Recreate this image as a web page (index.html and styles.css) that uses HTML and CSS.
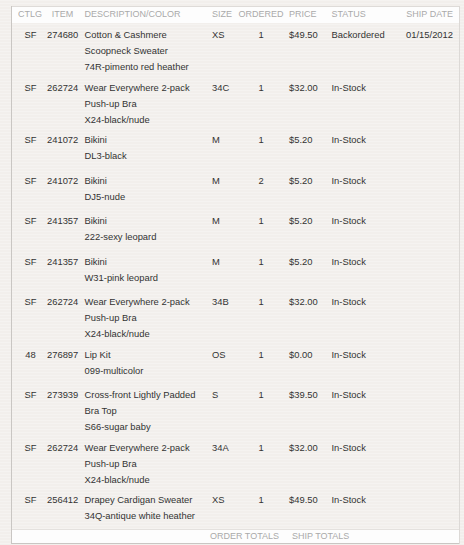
FILE: index.html
```html
<!DOCTYPE html>
<html>
<head>
<meta charset="utf-8">
<link rel="stylesheet" href="styles.css">
</head>
<body>
<div class="table">
  <div class="row head">
    <div class="c ctr">CTLG</div>
    <div class="c ctr">ITEM</div>
    <div class="c desc">DESCRIPTION/COLOR</div>
    <div class="c size">SIZE</div>
    <div class="c ctr">ORDERED</div>
    <div class="c price">PRICE</div>
    <div class="c status">STATUS</div>
    <div class="c date">SHIP DATE</div>
  </div>

  <div class="row item">
    <div class="c ctr cat">SF</div><div class="c ctr">274680</div>
    <div class="c desc"><div>Cotton &amp; Cashmere</div><div>Scoopneck Sweater</div><div>74R-pimento red heather</div></div>
    <div class="c size">XS</div><div class="c ctr">1</div><div class="c price">$49.50</div><div class="c status">Backordered</div><div class="c date">01/15/2012</div>
  </div>

  <div class="row item">
    <div class="c ctr cat">SF</div><div class="c ctr">262724</div>
    <div class="c desc"><div>Wear Everywhere 2-pack</div><div>Push-up Bra</div><div>X24-black/nude</div></div>
    <div class="c size">34C</div><div class="c ctr">1</div><div class="c price">$32.00</div><div class="c status">In-Stock</div><div class="c date"></div>
  </div>

  <div class="row item">
    <div class="c ctr cat">SF</div><div class="c ctr">241072</div>
    <div class="c desc"><div>Bikini</div><div>DL3-black</div></div>
    <div class="c size">M</div><div class="c ctr">1</div><div class="c price">$5.20</div><div class="c status">In-Stock</div><div class="c date"></div>
  </div>

  <div class="row item">
    <div class="c ctr cat">SF</div><div class="c ctr">241072</div>
    <div class="c desc"><div>Bikini</div><div>DJ5-nude</div></div>
    <div class="c size">M</div><div class="c ctr">2</div><div class="c price">$5.20</div><div class="c status">In-Stock</div><div class="c date"></div>
  </div>

  <div class="row item">
    <div class="c ctr cat">SF</div><div class="c ctr">241357</div>
    <div class="c desc"><div>Bikini</div><div>222-sexy leopard</div></div>
    <div class="c size">M</div><div class="c ctr">1</div><div class="c price">$5.20</div><div class="c status">In-Stock</div><div class="c date"></div>
  </div>

  <div class="row item">
    <div class="c ctr cat">SF</div><div class="c ctr">241357</div>
    <div class="c desc"><div>Bikini</div><div>W31-pink leopard</div></div>
    <div class="c size">M</div><div class="c ctr">1</div><div class="c price">$5.20</div><div class="c status">In-Stock</div><div class="c date"></div>
  </div>

  <div class="row item">
    <div class="c ctr cat">SF</div><div class="c ctr">262724</div>
    <div class="c desc"><div>Wear Everywhere 2-pack</div><div>Push-up Bra</div><div>X24-black/nude</div></div>
    <div class="c size">34B</div><div class="c ctr">1</div><div class="c price">$32.00</div><div class="c status">In-Stock</div><div class="c date"></div>
  </div>

  <div class="row item">
    <div class="c ctr cat">48</div><div class="c ctr">276897</div>
    <div class="c desc"><div>Lip Kit</div><div>099-multicolor</div></div>
    <div class="c size">OS</div><div class="c ctr">1</div><div class="c price">$0.00</div><div class="c status">In-Stock</div><div class="c date"></div>
  </div>

  <div class="row item">
    <div class="c ctr cat">SF</div><div class="c ctr">273939</div>
    <div class="c desc"><div>Cross-front Lightly Padded</div><div>Bra Top</div><div>S66-sugar baby</div></div>
    <div class="c size">S</div><div class="c ctr">1</div><div class="c price">$39.50</div><div class="c status">In-Stock</div><div class="c date"></div>
  </div>

  <div class="row item">
    <div class="c ctr cat">SF</div><div class="c ctr">262724</div>
    <div class="c desc"><div>Wear Everywhere 2-pack</div><div>Push-up Bra</div><div>X24-black/nude</div></div>
    <div class="c size">34A</div><div class="c ctr">1</div><div class="c price">$32.00</div><div class="c status">In-Stock</div><div class="c date"></div>
  </div>

  <div class="row item">
    <div class="c ctr cat">SF</div><div class="c ctr">256412</div>
    <div class="c desc"><div>Drapey Cardigan Sweater</div><div>34Q-antique white heather</div></div>
    <div class="c size">XS</div><div class="c ctr">1</div><div class="c price">$49.50</div><div class="c status">In-Stock</div><div class="c date"></div>
  </div>

  <div class="row foot">
    <div class="c total-order">ORDER TOTALS</div>
    <div class="c total-ship">SHIP TOTALS</div>
  </div>
</div>
</body>
</html>
```

FILE: styles.css
```css
html, body {
  margin: 0;
  padding: 0;
}
body {
  background-color: #f2efec;
  background-image: repeating-linear-gradient(180deg, rgba(255,255,255,0.25) 0px, rgba(255,255,255,0.25) 1px, rgba(0,0,0,0) 1px, rgba(0,0,0,0) 3px);
  font-family: "Liberation Sans", Arial, sans-serif;
  color: #333333;
  padding: 6px 0 0 11px;
  width: 464px;
  height: 545px;
  box-sizing: border-box;
  overflow: hidden;
}
.table {
  width: 449px;
  border-left: 1px solid #c9c6c3;
  border-right: 1px solid #dcd9d6;
  box-sizing: border-box;
}
.row {
  display: grid;
  grid-template-columns: 35px 31px 130px 28px 50px 42px 70px 61px;
}
.head {
  background: #fdfdfd;
  border-top: 1px solid #dedbd8;
  height: 17px;
  box-sizing: border-box;
  font-size: 9px;
  color: #aaaaaa;
  line-height: 15px;
}
.item {
  font-size: 9.4px;
  line-height: 16px;
  padding: 4px 0 0.5px;
  min-height: 40.5px;
  box-sizing: border-box;
}
.c {
  white-space: nowrap;
}
.ctr {
  text-align: center;
}
.cat {
  padding-left: 2px;
}
.head .ctr:first-child {
  padding-left: 1px;
}
.desc {
  padding-left: 6.5px;
}
.size {
  padding-left: 4px;
}
.price {
  padding-left: 3px;
}
.status {
  padding-left: 3.5px;
}
.date {
  text-align: right;
  padding-right: 6px;
}
.foot {
  background: #fdfdfd;
  border-top: 1px solid #e4e1de;
  border-bottom: 1px solid #c9c6c3;
  height: 15px;
  box-sizing: border-box;
  font-size: 9px;
  line-height: 13px;
  color: #aaaaaa;
}
.total-order {
  grid-column: 4 / span 2;
  padding-left: 2px;
}
.total-ship {
  grid-column: 6 / span 2;
  padding-left: 6px;
}
```
